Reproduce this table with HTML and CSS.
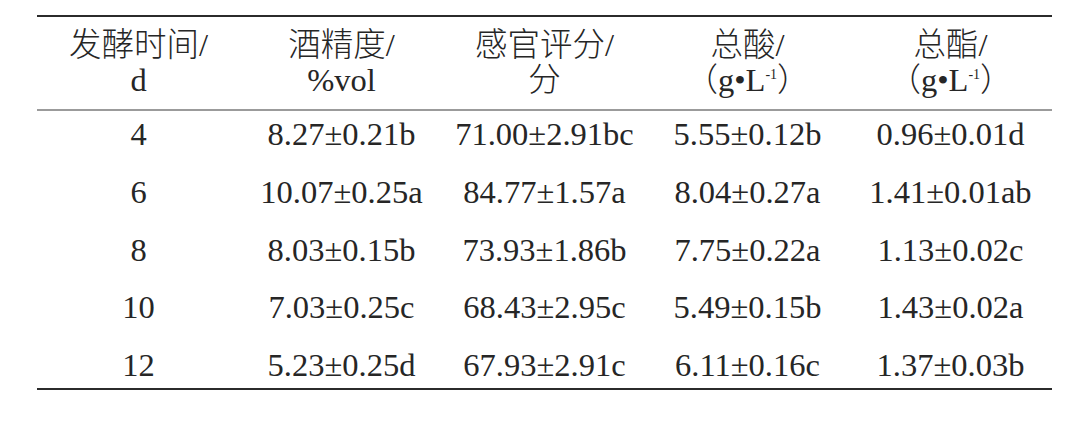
FILE: index.html
```html
<!DOCTYPE html>
<html>
    <head>
        <title>发酵时间对酒品质的影响</title>
        <meta charset="UTF-8">
        <meta name="viewport" content="width=device-width, initial-scale=1.0">
        <link rel="stylesheet" href="styles.css">
    </head>
    <body>
        <div id="main">
            <table class="result">
                <thead>
                    <tr>
                        <th>发酵时间/<br>d</th>
                        <th>酒精度/<br>%vol</th>
                        <th>感官评分/<br>分</th>
                        <th>总酸/<br><span class="unit">（g•L<sup>-1</sup>）</span></th>
                        <th>总酯/<br><span class="unit">（g•L<sup>-1</sup>）</span></th>
                    </tr>
                </thead>
                <tbody>
                    <tr class="first">
                        <td>4</td>
                        <td>8.27±0.21b</td>
                        <td>71.00±2.91bc</td>
                        <td>5.55±0.12b</td>
                        <td>0.96±0.01d</td>
                    </tr>
                    <tr>
                        <td>6</td>
                        <td>10.07±0.25a</td>
                        <td>84.77±1.57a</td>
                        <td>8.04±0.27a</td>
                        <td>1.41±0.01ab</td>
                    </tr>
                    <tr>
                        <td>8</td>
                        <td>8.03±0.15b</td>
                        <td>73.93±1.86b</td>
                        <td>7.75±0.22a</td>
                        <td>1.13±0.02c</td>
                    </tr>
                    <tr>
                        <td>10</td>
                        <td>7.03±0.25c</td>
                        <td>68.43±2.95c</td>
                        <td>5.49±0.15b</td>
                        <td>1.43±0.02a</td>
                    </tr>
                    <tr class="last">
                        <td>12</td>
                        <td>5.23±0.25d</td>
                        <td>67.93±2.91c</td>
                        <td>6.11±0.16c</td>
                        <td>1.37±0.03b</td>
                    </tr>
                </tbody>
            </table>
        </div>
    </body>
</html>
```

FILE: styles.css
```css
body {
    margin: 0;
    background-color: #ffffff;
}

#main {
    padding: 15px 0 0 37px;
}

.result {
    width: 1015px;
    table-layout: fixed;
    border-collapse: collapse;
    border-top: 2px solid #2b2b2b;
    border-bottom: 2px solid #2b2b2b;
    font-family: "Liberation Serif", "Noto Sans CJK SC", serif;
    font-size: 32.5px;
    color: #262626;
}

.result th {
    font-weight: 300;
    line-height: 35px;
    padding: 11px 0;
    border-bottom: 2px solid #9b9b9b;
}

.result td {
    text-align: center;
    line-height: 35.75px;
    padding: 11px 0;
}

.result tr.first td {
    padding-top: 6px;
}

.result tr.last td {
    padding-bottom: 4px;
}

.unit sup {
    font-size: 14px;
    vertical-align: 12px;
    line-height: 0;
}
```
